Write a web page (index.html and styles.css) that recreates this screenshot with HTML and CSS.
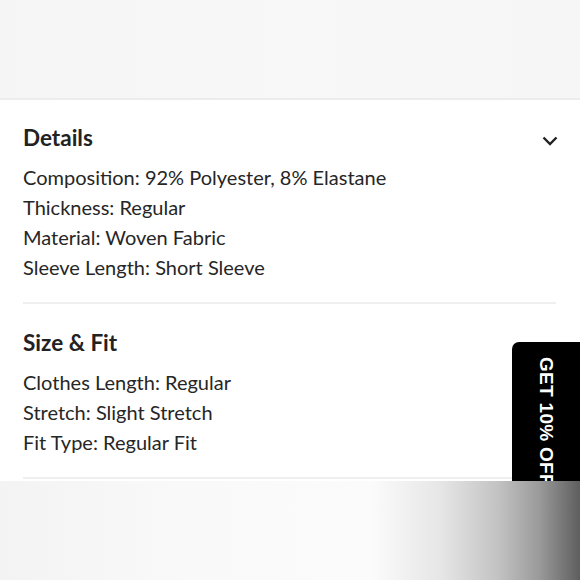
FILE: index.html
```html
<!DOCTYPE html>
<html>
<head>
<meta charset="utf-8">
<link rel="stylesheet" href="styles.css">
</head>
<body>
<div class="top"></div>
<main class="content">
  <section class="block">
    <div class="block-head">
      <h2>Details</h2>
      <svg class="chev" width="16" height="10" viewBox="0 0 16 10"><path d="M1.5 1.5 L8 8 L14.5 1.5" fill="none" stroke="#222" stroke-width="2.4"/></svg>
    </div>
    <ul class="list">
      <li>Composition: 92% Polyester, 8% Elastane</li>
      <li>Thickness: Regular</li>
      <li>Material: Woven Fabric</li>
      <li>Sleeve Length: Short Sleeve</li>
    </ul>
  </section>
  <section class="block">
    <div class="block-head">
      <h2>Size &amp; Fit</h2>
    </div>
    <ul class="list">
      <li>Clothes Length: Regular</li>
      <li>Stretch: Slight Stretch</li>
      <li>Fit Type: Regular Fit</li>
    </ul>
  </section>
</main>
<div class="badge"><span>GET 10% OFF</span></div>
<div class="bottom"></div>
</body>
</html>
```
FILE: styles.css
```css
html, body {
  margin: 0;
  padding: 0;
  background: #fff;
  width: 580px;
  height: 580px;
  overflow: hidden;
  position: relative;
  font-family: Lato, "Open Sans", sans-serif;
  color: #222;
}
.top {
  height: 98px;
  background: linear-gradient(to right, #f5f5f5, #f8f8f8 50%, #f6f6f6);
  border-bottom: 2px solid #ececec;
}
.content {
  padding: 23px 24px 0 23px;
}
.block {
  border-bottom: 2px solid #efefef;
  padding-bottom: 20px;
  margin-bottom: 24px;
}
.block-head {
  display: flex;
  justify-content: space-between;
  align-items: center;
  height: 30px;
  margin-bottom: 9px;
}
.block-head h2 {
  margin: 0;
  font-size: 22.5px;
  font-weight: 700;
  line-height: 30px;
  color: #222;
}
.chev {
  margin-right: -2px;
  margin-top: 5px;
}
.list {
  list-style: none;
  margin: 0;
  padding: 0;
}
.list li {
  font-size: 20px;
  line-height: 30px;
  color: #262626;
}
.badge {
  position: absolute;
  left: 512px;
  top: 342px;
  width: 80px;
  height: 180px;
  background: #000;
  border-radius: 7px 0 0 0;
  display: flex;
  justify-content: flex-start;
  padding-left: 23px;
  box-sizing: border-box;
}
.badge span {
  writing-mode: vertical-rl;
  color: #fff;
  font-family: "Liberation Sans", Arial, sans-serif;
  font-weight: 700;
  font-size: 19px;
  letter-spacing: 0.3px;
  margin-top: 15px;
}
.bottom {
  position: absolute;
  left: 0;
  top: 481px;
  width: 580px;
  height: 99px;
  background: linear-gradient(to right, #f3f3f3 0%, #f9f9f9 30%, #fbfbfb 64%, #e6e6e6 76%, #c2c2c2 86%, #9a9a9a 93%, #5e5e5e 100%);
}
```
